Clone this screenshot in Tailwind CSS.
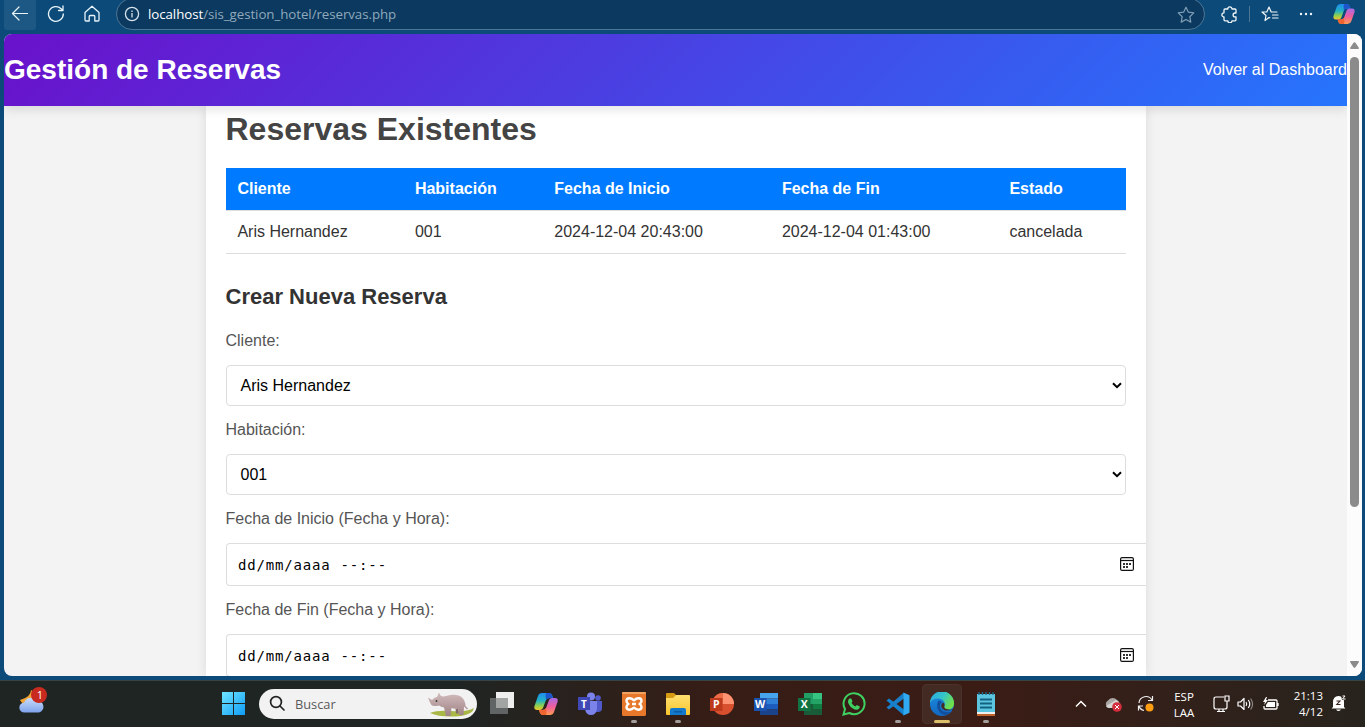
<!DOCTYPE html>
<html lang="es">
<head>
<meta charset="utf-8">
<title>Gestión de Reservas</title>
<script src="https://cdn.jsdelivr.net/npm/@tailwindcss/browser@4"></script>
</head>
<body class="w-[1365px] h-[727px] overflow-hidden flex flex-col bg-[#0c4b79] font-['Liberation_Sans',sans-serif]">
<svg width="0" height="0" class="absolute">
  <defs>
    <linearGradient id="cpA" x1="0" y1="0" x2="0" y2="1"><stop offset="0" stop-color="#1f8df0"/><stop offset=".45" stop-color="#22b3c4"/><stop offset=".75" stop-color="#8fd04e"/><stop offset="1" stop-color="#f2c62c"/></linearGradient>
    <linearGradient id="cpB" x1="0" y1="0" x2="0" y2="1"><stop offset="0" stop-color="#a66be8"/><stop offset=".5" stop-color="#ee5d9d"/><stop offset="1" stop-color="#ff9a50"/></linearGradient>
    <linearGradient id="win" x1="0" y1="0" x2="1" y2="1"><stop offset="0" stop-color="#6fe6ff"/><stop offset="1" stop-color="#0f9bf5"/></linearGradient>
    <linearGradient id="cloud" x1="0" y1="0" x2="0" y2="1"><stop offset="0" stop-color="#c9dcfa"/><stop offset="1" stop-color="#7fa4ec"/></linearGradient>
    <linearGradient id="edA" x1="0" y1="0" x2="1" y2=".5"><stop offset="0" stop-color="#2aa5e2"/><stop offset=".55" stop-color="#35c5c9"/><stop offset="1" stop-color="#6fe04b"/></linearGradient>
    <linearGradient id="edB" x1="0" y1="0" x2="0" y2="1"><stop offset="0" stop-color="#1b8fe0"/><stop offset="1" stop-color="#1366c0"/></linearGradient>
    <linearGradient id="fold" x1="0" y1="0" x2="0" y2="1"><stop offset="0" stop-color="#ffe070"/><stop offset="1" stop-color="#f8c52d"/></linearGradient>
    <linearGradient id="rh" x1="0" y1="0" x2="0" y2="1"><stop offset="0" stop-color="#d3bcbd"/><stop offset="1" stop-color="#9f8285"/></linearGradient>
    <symbol id="copilot" viewBox="0 0 24 22">
      <path d="M8 0h7q3 0 4 5h-3q-3 0-4 2L9 15q-1 2-3 2H3q-3.500 0-2.500-4L4 3Q5 0 8 0Z" fill="url(#cpA)"/>
      <path d="M12 0h3q3 0 4 5h-3q-3 0-4 2-1-4 0-7Z" fill="#1d55cc"/>
      <path d="M16 22H9q-3 0-4-5h3q3 0 4-2L15 7q1-2 3-2h3q3.500 0 2.500 4L20 19q-1 3-4 3Z" fill="url(#cpB)"/>
      <path d="M12 22H9q-3 0-4-5h3q3 0 4-2 1 4 0 7Z" fill="#f0642f"/>
    </symbol>
    <symbol id="cal" viewBox="0 0 14 14">
      <rect x=".6" y=".6" width="12.800" height="12.800" rx="1.500" fill="none" stroke="#111" stroke-width="1.200"/>
      <path d="M.6 3.500h12.800" stroke="#111" stroke-width="1.200"/>
      <path d="M3 6h2v2H3zM6 6h2v2H6zM9 6h2v2H9zM3 9h2v2H3zM6 9h2v2H6z" fill="#333"/>
    </symbol>
  </defs>
</svg>

<!-- Browser toolbar -->
<div class="h-[34px] shrink-0 flex items-start">
  <div class="ml-1 w-8 h-[30px] bg-[#1d5783] rounded-b-[3px] flex justify-center pt-1.5">
    <svg width="18" height="16" fill="none" stroke="#e9f3fa" stroke-width="1.200" stroke-linecap="round" stroke-linejoin="round"><path d="M1.500 7.500h15M8 1 1.500 7.500 8 14"/></svg>
  </div>
  <svg class="ml-[11px] mt-[5px]" width="18" height="18" fill="none" stroke="#e9f3fa" stroke-width="1.300" stroke-linecap="round" stroke-linejoin="round"><path d="M16.300 9a7.400 7.400 0 1 1-2.200-5.300L16 5.500M16 1v4.500h-4.500"/></svg>
  <svg class="ml-[19px] mt-[5px]" width="16" height="18" fill="none" stroke="#e9f3fa" stroke-width="1.300" stroke-linejoin="round"><path d="M1 7.500 8 1.200l7 6.300V15q0 1-1 1h-3.200v-4.500q0-1-1-1H6.200q-1 0-1 1V16H2q-1 0-1-1Z"/></svg>
  <div class="ml-4 -mt-[2px] w-[1089px] h-8 rounded-full bg-[#0b395f] border border-[#4d7695] flex items-center shrink-0">
    <svg class="ml-[7px]" width="16" height="16" fill="none" stroke="#d6e3ec" stroke-width="1.300"><circle cx="8" cy="8" r="6.600"/><path d="M8 7v4.500M8 4.500V6"/></svg>
    <span class="ml-2 text-[13.300px] tracking-[-0.060px] leading-5 font-['Open_Sans',sans-serif] text-[#8fa9bc] w-[260px] whitespace-nowrap"><span class="text-white">localhost</span>/sis_gestion_hotel/reservas.php</span>
    <svg class="ml-auto mr-[9px]" width="18" height="17" fill="none" stroke="#7f9db4" stroke-width="1.200" stroke-linejoin="round"><path d="m9 1.200 2.400 5 5.400.7-4 3.800 1 5.400L9 13.500l-4.800 2.600 1-5.400-4-3.800 5.400-.7Z"/></svg>
  </div>
  <svg class="ml-4 mt-1.5" width="17" height="17" fill="none" stroke="#f0f6fa" stroke-width="1.300" stroke-linejoin="round"><path d="M4 3h2.800a2.100 2.100 0 0 1 4.200 0h3q1 0 1 1v3h-1a1.900 1.900 0 0 0 0 3.800h1v3q0 1-1 1h-3a2.100 2.100 0 0 1-4.200 0H4q-1 0-1-1V11a2.100 2.100 0 0 1 0-4.200V4q0-1 1-1Z"/></svg>
  <div class="ml-[11px] mt-1.5 w-px h-4 bg-[#4d7695]"></div>
  <svg class="ml-[11px] mt-1.5" width="18" height="17" fill="none" stroke="#f0f6fa" stroke-width="1.200" stroke-linecap="round" stroke-linejoin="round"><path d="M8.800 11.800 8 11.500l-4 3 1-5L1 6h4.800L8 1l2.200 5H16M11.500 9H17M11.500 12H17"/></svg>
  <svg class="ml-5 mt-3" width="14" height="4" fill="#f0f6fa"><circle cx="2" cy="2" r="1.200"/><circle cx="7" cy="2" r="1.200"/><circle cx="12" cy="2" r="1.200"/></svg>
  <svg class="ml-[20px] mt-1" width="22" height="20"><use href="#copilot"/></svg>
</div>

<!-- Page viewport -->
<div class="ml-1 w-[1358px] h-[642px] shrink-0 rounded-lg overflow-hidden flex bg-[#f3f3f3]">
  <div class="w-[1343px] h-full flex flex-col overflow-hidden">
    <header class="relative h-[72px] shrink-0 flex items-center justify-between text-white bg-[linear-gradient(135deg,#6a11cb,#2575fc)] shadow-[0_4px_10px_rgba(0,0,0,0.1)]">
      <h1 class="text-[28px] font-bold leading-8">Gestión de Reservas</h1>
      <a class="text-base whitespace-nowrap">Volver al Dashboard</a>
    </header>
    <main class="ml-[202px] w-[940px] flex-1 bg-white px-5 shadow-[0_0_10px_rgba(0,0,0,0.1)] text-[#333]">
      <h2 class="pt-[5px] h-[62px] text-[32px] leading-[37px] font-bold text-[#444] -ml-[0.500px]">Reservas Existentes</h2>
      <table class="w-[900px] table-fixed border-collapse text-left text-base leading-[18px]">
        <colgroup><col class="w-[177.500px]"><col class="w-[139px]"><col class="w-[228px]"><col class="w-[227.500px]"><col></colgroup>
        <thead><tr class="h-[42px] bg-[#007bff] text-white border-b border-[#ddd]"><th class="pl-[11.400px]">Cliente</th><th class="pl-[11.400px]">Habitación</th><th class="pl-[11.800px]">Fecha de Inicio</th><th class="pl-[11.400px]">Fecha de Fin</th><th class="pl-[11.400px]">Estado</th></tr></thead>
        <tbody><tr class="h-[43px] border-b border-[#ddd]"><td class="pl-[11.400px]">Aris Hernandez</td><td class="pl-[11.400px]">001</td><td class="pl-[11.800px]">2024-12-04 20:43:00</td><td class="pl-[11.400px]">2024-12-04 01:43:00</td><td class="pl-[11.400px]">cancelada</td></tr></tbody>
      </table>
      <h3 class="mt-[30px] text-[22px] leading-[26px] font-bold -ml-[0.500px]">Crear Nueva Reserva</h3>
      <form class="text-base">
        <label class="block mt-[22px] -ml-[0.500px] leading-[18px] text-[#555]">Cliente:</label>
        <div class="mt-[15px] h-[41px] rounded border border-[#ddd] flex items-center justify-between pl-[13.500px] pr-[3px] text-black"><span class="pt-0.5">Aris Hernandez</span><svg width="10" height="7" fill="none" stroke="#000" stroke-width="2"><path d="m1 1.200 4 4 4-4"/></svg></div>
        <label class="block mt-[15px] -ml-[0.500px] leading-[18px] text-[#555]">Habitación:</label>
        <div class="mt-[15px] h-[41px] rounded border border-[#ddd] flex items-center justify-between pl-[13.500px] pr-[3px] text-black"><span class="pt-0.5">001</span><svg width="10" height="7" fill="none" stroke="#000" stroke-width="2"><path d="m1 1.200 4 4 4-4"/></svg></div>
        <label class="block mt-[15px] -ml-[0.500px] leading-[18px] text-[#555]">Fecha de Inicio (Fecha y Hora):</label>
        <div class="mt-[15px] w-[920px] h-[43px] rounded-l border border-r-0 border-[#ddd] flex items-center pl-[11px] pr-3 text-black font-['DejaVu_Sans_Mono',monospace] text-[14px] tracking-[0.830px]"><span class="pt-[3px]">dd/mm/aaaa</span><span class="ml-2.5 pt-[3px]">--:--</span><svg class="ml-auto" width="14" height="14"><use href="#cal"/></svg></div>
        <label class="block mt-[15px] -ml-[0.500px] leading-[18px] text-[#555]">Fecha de Fin (Fecha y Hora):</label>
        <div class="mt-[15px] w-[920px] h-[43px] rounded-l border border-r-0 border-[#ddd] flex items-center pl-[11px] pr-3 text-black font-['DejaVu_Sans_Mono',monospace] text-[14px] tracking-[0.830px]"><span class="pt-[3px]">dd/mm/aaaa</span><span class="ml-2.5 pt-[3px]">--:--</span><svg class="ml-auto" width="14" height="14"><use href="#cal"/></svg></div>
      </form>
    </main>
  </div>
  <!-- Scrollbar -->
  <div class="w-[15px] bg-[#fcfcfc] flex flex-col items-center pt-2">
    <svg width="9" height="7" fill="#8b8b8b"><path d="M3.500.8q1-1 2 0L9 6q0 1-1 1H1Q0 7 0 6Z"/></svg>
    <div class="mt-2 w-[9px] h-[450px] rounded-full bg-[#8b8b8b]"></div>
    <svg class="mt-auto mb-2" width="9" height="7" fill="#8b8b8b"><path d="M3.500 6.200q1 1 2 0L9 1q0-1-1-1H1Q0 0 0 1Z"/></svg>
  </div>
</div>
<div class="h-[4px] shrink-0"></div>

<!-- Taskbar -->
<div class="h-[47px] shrink-0 flex items-center border-t border-[#3a4344] pb-px bg-[linear-gradient(90deg,#1e2523_0%,#1e2523_33%,#361d16_52%,#3a1c15_72%,#33201a_85%,#27241d_100%)]">
  <svg class="ml-[18px] -mt-[7px]" width="30" height="30"><path d="M13 5q0 7-11 10 3 6 9 5 7-2 6-12Z" fill="#f2a332"/><path d="M6.500 27.500a5 5 0 0 1-.3-10 6.500 6.500 0 0 1 11.800-1.500 5.800 5.800 0 0 1 3 11.500Z" fill="url(#cloud)"/><circle cx="21" cy="10" r="8" fill="#c82a20"/><text x="22" y="14" text-anchor="middle" font-size="11" fill="#fff" font-family="Open Sans">1</text></svg>
  <svg class="ml-[174px]" width="23" height="23" fill="url(#win)"><path d="M0 0h11v11H0zM12 0h11v11H12zM0 12h11v11H0zM12 12h11v11H12z"/></svg>
  <div class="ml-[14px] w-[218px] h-[30px] rounded-full bg-[#f3f2f2] flex items-center">
    <svg class="ml-[10px]" width="17" height="17" fill="none" stroke="#222" stroke-width="1.700" stroke-linecap="round"><circle cx="7" cy="7" r="5.400"/><path d="m11 11 4 4"/></svg>
    <span class="ml-[9px] text-[12.800px] leading-5 font-['Open_Sans',sans-serif] text-[#5a5a5a]">Buscar</span>
    <svg class="ml-auto mr-[2px]" width="48" height="26"><path d="M3 22Q10 19 24 20 40 21 47 17 46 23 34 25 14 27 3 22Z" fill="#a9b747"/><path d="M1 6.500 5 9 8 6.500 10 6 12 1.500 13.500 4.500Q16 6 19 5 30 2 35 6.500 38.500 10 38.500 15L41 17.500 40 18.500 37 15.500 36.500 24H32L31.500 17Q28 18.500 24.500 17L23.500 25H19L17 16.500Q14 16 12 14.500 6 16 4 13.500 2.500 10.500 1 6.500Z" fill="url(#rh)"/><path d="M28.500 18 31.500 17 31.500 22.500H29Z" fill="#856a6d"/><circle cx="9.500" cy="10" r=".9" fill="#333"/></svg>
  </div>
  <!-- Pinned applications, 44px apart -->
  <div class="ml-[3px] flex h-full">
    <div class="w-11 flex items-center justify-center"><svg width="24" height="23"><path d="M6 0h18v16H6z" fill="#eee"/><path d="M0 6h18v16H0z" fill="#606464"/><path d="M6 6h12v10H6z" fill="#a2a4a4"/></svg></div>
    <div class="w-11 flex items-center justify-center"><svg width="24" height="22"><use href="#copilot"/></svg></div>
    <div class="w-11 flex items-center justify-center"><svg width="24" height="24"><circle cx="20" cy="6" r="2.800" fill="#5059c9"/><path d="M16 9h8v7q0 4-4 4h-4z" fill="#5059c9"/><circle cx="13" cy="4.500" r="4" fill="#7b83eb"/><path d="M7 9h12v8q-1 6-6 6t-6-6Z" fill="#7b83eb"/><path d="M0 5h12v13H0z" fill="#4048b5"/><text x="6" y="15.500" text-anchor="middle" font-size="10" font-weight="700" fill="#fff" font-family="Open Sans">T</text></svg></div>
    <div class="w-11 relative flex items-center justify-center"><svg width="24" height="24"><rect width="24" height="24" rx="1.500" fill="#e7782b"/><rect width="24" height="2" rx="1" fill="#f3a260"/><path d="M12 8.300C9 5.500 4.500 5.500 4.500 9q0 2 2 3-2 1-2 3c0 3.500 4.500 3.500 7.500.7 3 2.800 7.500 2.800 7.500-.7q0-2-2-3 2-1 2-3c0-3.500-4.500-3.500-7.500-.7ZM10 12h4" fill="none" stroke="#fff" stroke-width="2.400" stroke-linejoin="round"/></svg><i class="absolute bottom-[3px] w-1.5 h-[3px] rounded-full bg-[#a39e9b]"></i></div>
    <div class="w-11 relative flex items-center justify-center"><svg width="24" height="22"><path d="M0 1q0-1 1-1h7l3 3-2 4H0Z" fill="#d79b13"/><path d="M0 5h7l3-3h13q1 0 1 1v18q0 1-1 1H1q-1 0-1-1Z" fill="url(#fold)"/><path d="M4 22v-5q0-2 2-2h12q2 0 2 2v5Z" fill="#1279cf"/><path d="M8 18h8v1.500H8z" fill="#0e5b9f"/></svg><i class="absolute bottom-[3px] w-1.5 h-[3px] rounded-full bg-[#a39e9b]"></i></div>
    <div class="w-11 flex items-center justify-center"><svg width="24" height="22"><circle cx="13" cy="11" r="11" fill="#d9502f"/><path d="M13 0a11 11 0 0 1 11 11H13Z" fill="#ff9271"/><path d="M13 0v11H2A11 11 0 0 1 13 0Z" fill="#ed6c47"/><path d="M0 5h12.500v13H0z" fill="#bd3a1d"/><text x="6.200" y="15.200" text-anchor="middle" font-size="10.500" font-weight="700" fill="#fff" font-family="Open Sans">P</text></svg></div>
    <div class="w-11 flex items-center justify-center"><svg width="24" height="22"><path d="M6 0h18v5.500H6z" fill="#47a5ee"/><path d="M6 5.500h18V11H6z" fill="#2f80d8"/><path d="M6 11h18v5.500H6z" fill="#1b5cbe"/><path d="M6 16.500h18V22H6z" fill="#1a438c"/><path d="M0 5h12.500v13H0z" fill="#1a52b0"/><text x="6.200" y="15.200" text-anchor="middle" font-size="10.500" font-weight="700" fill="#fff" font-family="Open Sans">W</text></svg></div>
    <div class="w-11 flex items-center justify-center"><svg width="24" height="22"><path d="M6 0h9v11H6z" fill="#219f66"/><path d="M15 0h9v6h-9z" fill="#35c481"/><path d="M15 6h9v5h-9z" fill="#23a366"/><path d="M6 11h18v11H6z" fill="#195b38"/><path d="M15 11h9v5h-9z" fill="#107c41"/><path d="M0 5h12.500v13H0z" fill="#107341"/><text x="6.200" y="15.200" text-anchor="middle" font-size="10.500" font-weight="700" fill="#fff" font-family="Open Sans">X</text></svg></div>
    <div class="w-11 flex items-center justify-center"><svg width="24" height="24"><path d="M1.500 22.500 3 17A10.500 10.500 0 1 1 7.200 21Z" fill="none" stroke="#3fd062" stroke-width="2"/><path d="M7.500 6.500h1.800l1.200 3-1 1.500q1.500 2.500 4 3.500l1.300-1.500 3 1.400q0 3-3.300 3.300C10 17.500 6 12.500 6 9.500q0-2 1.500-3Z" fill="#3fd062"/></svg></div>
    <div class="w-11 relative flex items-center justify-center"><svg width="24" height="24"><path d="M.5 8.500 3 6.500l15 11v6Z" fill="#1383cf"/><path d="M.5 15.500 3 17.500 18 6.500v-6Z" fill="#1a7fc8"/><path d="m17.500.5 6 2.800v17.400l-6 2.800Z" fill="#30a9f2"/></svg><i class="absolute bottom-[3px] w-1.5 h-[3px] rounded-full bg-[#a39e9b]"></i></div>
    <div class="w-11 relative flex items-center justify-center"><div class="w-10 h-10 rounded bg-[#432a22] border border-[#4a3129] flex items-center justify-center"><svg width="24" height="24" class="shrink-0"><circle cx="12" cy="12" r="12" fill="url(#edB)"/><path d="M0 11A12 12 0 0 1 24 11.500c0 4-3 6-6 6-3.500 0-5-1.500-3.500-3.500C16 11 13 6.500 8 6.500 4 6.500 1 8.500 0 11Z" fill="url(#edA)"/><path d="M8.500 8.500C5 13 8 23 16 23q4-1 6-4c-5 2.500-11 1-12-4-.4-2.500.8-4 2-5q-1.500-1.500-3.500-1.500Z" fill="#124f9d"/><path d="M13 10.500c-2 1.500-2.500 4.500 0 6.500 3 2.500 8 1.500 11-.5v2l-.5.500c0-1.500-2-1-5-1.500-3 0-5-2-4-3.700Q15 12 13 10.500Z" fill="#432a22"/></svg></div><i class="absolute bottom-[3px] w-4 h-[3px] rounded-full bg-[#dcc06c]"></i></div>
    <div class="w-11 relative flex items-center justify-center"><svg width="20" height="24"><path d="M1 2h18v18H1z" fill="#5cc5e0"/><path d="M1 20h18v2H1z" fill="#eee"/><path d="M1 22h18v2H1z" fill="#c0622b"/><path d="M3 0v3M6.500 0v3M10 0v3M13.500 0v3M17 0v3" stroke="#1c6f8d" stroke-width="1.300"/><path d="M4 7.500h12M4 11.500h12M4 15.500h12" stroke="#12617e" stroke-width="1.800"/></svg><i class="absolute bottom-[3px] w-1.5 h-[3px] rounded-full bg-[#a39e9b]"></i></div>
  </div>
  <!-- System tray -->
  <div class="ml-auto mr-[18px] flex items-center text-white font-['Open_Sans',sans-serif] text-[11.500px] leading-4">
    <svg width="12" height="8" fill="none" stroke="#fff" stroke-width="1.500"><path d="m1 6.500 5-5 5 5"/></svg>
    <svg class="ml-[18px] mt-0.5" width="18" height="16"><path d="M4 11a4 4 0 0 1-1-7.500A5.500 5.500 0 0 1 12 3q3 1 3 8Z" fill="#aaa6a4"/><path d="M1 9 11 3q4 1 4 8H4Q2 11 1 9Z" fill="#d6d3d1"/><circle cx="12" cy="10" r="4.800" fill="#d52d3d"/><path d="m10 8 4 4m0-4-4 4" stroke="#fff"/></svg>
    <svg class="ml-[14px]" width="18" height="18" fill="none" stroke="#eee" stroke-width="1.200"><path d="M2 8a7 7 0 0 1 13-3M15.500 1v4.500H11M7 15.500Q3 14.500 2 11M1.500 15.500V11H6"/><circle cx="12.500" cy="12.500" r="4" fill="#ff9d12" stroke="none"/></svg>
    <div class="ml-[18px] w-[22px] text-center pt-0.5">ESP<br>LAA</div>
    <svg class="ml-[18px]" width="17" height="18" fill="none" stroke="#fff" stroke-width="1.200"><path d="M11 2H3Q1 2 1 4v8q0 2 2 2h9q2 0 2-2V9M4 16.500h8M6 14v2M10 14v2M12 1h4v5h-4zM14 6v5"/></svg>
    <svg class="ml-[7px]" width="17" height="14" fill="none" stroke="#fff" stroke-width="1.200" stroke-linejoin="round"><path d="M1 5h2.500L7 1.500v11L3.500 9H1ZM9 5q1.500 2 0 4M11.300 3q3 4 0 8"/><path d="M13.600 1.500q4 5.500 0 11" stroke="#8b8580"/></svg>
    <svg class="ml-2" width="17" height="14" fill="none" stroke="#fff" stroke-width="1.300"><path d="M6 3h8q1 0 1 1v7q0 1-1 1H3q-1 0-1-1V9M16 6v3"/><path d="M6 5h7v5H4V8Z" fill="#fff" stroke="none"/><path d="m4 0-3 5h2L2 8l4-5H4l1-3Z" fill="#fff" stroke="none"/></svg>
    <div class="ml-[14px] w-[30px] text-right">21:13<br>4/12</div>
    <svg class="ml-[8px]" width="16" height="17" fill="#fff"><path d="M2 12V7.500Q2 1 7.500 1T13 7.500V12l1.500 1.500H.5Z"/><path d="M5 14.500h5q-2.500 3-5 0Z"/><path d="M5.500 6h3.500L5.800 9.500H9.500" fill="none" stroke="#342019" stroke-width="1.100"/><path d="M10 0h6v5h-5z" fill="#2a231c"/><path d="M11.500 1h2.500l-2.500 3H14.500" fill="none" stroke="#fff"/></svg>
  </div>
</div>
</body>
</html>
